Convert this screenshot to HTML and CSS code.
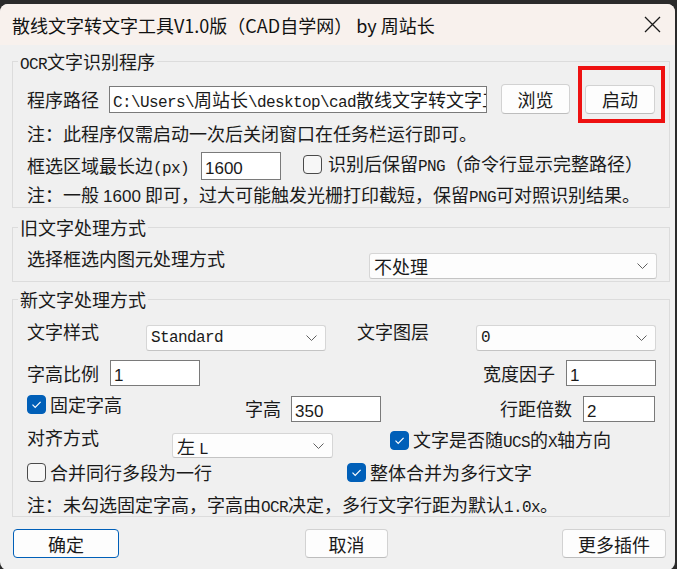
FILE: index.html
```html
<!DOCTYPE html>
<html lang="zh-CN">
<head>
<meta charset="utf-8">
<title>散线文字转文字工具</title>
<link rel="stylesheet" href="styles.css">
</head>
<body>
<div class="window">
  <div class="titlebar">
    <span class="title">散线文字转文字工具V1.0版（CAD自学网） by 周站长</span>
    <svg class="close" width="17" height="17" viewBox="0 0 17 17"><path d="M1 1L16 16M16 1L1 16"/></svg>
  </div>
  <div class="content">
    <section class="group g1">
      <span class="legend"><span class="m">OCR</span>文字识别程序</span>
      <div class="row r-path">
        <span class="label w-path">程序路径</span>
        <div class="input path"><span class="m">C:\Users\</span>周站长<span class="m">\desktop\cad</span>散线文字转文字工具</div>
        <button class="btn b-browse">浏览</button>
        <button class="btn b-start">启动</button>
      </div>
      <div class="note n1">注：此程序仅需启动一次后关闭窗口在任务栏运行即可。</div>
      <div class="row r-size">
        <span class="label w-size">框选区域最长边<span class="m">(px)</span></span>
        <div class="input i-size"><span class="d">1600</span></div>
        <label class="cb-item cb-png"><span class="cb"></span><span>识别后保留<span class="m">PNG</span>（命令行显示完整路径）</span></label>
      </div>
      <div class="note n2">注：一般 <span class="d">1600</span> 即可，过大可能触发光栅打印截短，保留<span class="m">PNG</span>可对照识别结果。</div>
    </section>

    <section class="group g2">
      <span class="legend">旧文字处理方式</span>
      <div class="row r-old">
        <span class="label">选择框选内图元处理方式</span>
        <div class="select s-old"><span>不处理</span><svg class="chev" width="11" height="6" viewBox="0 0 11 6"><path d="M0.5 0.5L5.5 5.5L10.5 0.5"/></svg></div>
      </div>
    </section>

    <section class="group g3">
      <span class="legend">新文字处理方式</span>
      <div class="row r1">
        <span class="label w-style">文字样式</span>
        <div class="select s-style"><span class="m">Standard</span><svg class="chev" width="11" height="6" viewBox="0 0 11 6"><path d="M0.5 0.5L5.5 5.5L10.5 0.5"/></svg></div>
        <span class="label w-layer">文字图层</span>
        <div class="select s-layer"><span class="m">0</span><svg class="chev" width="11" height="6" viewBox="0 0 11 6"><path d="M0.5 0.5L5.5 5.5L10.5 0.5"/></svg></div>
      </div>
      <div class="row r2">
        <span class="label w-ratio">字高比例</span>
        <div class="input i-ratio"><span class="d">1</span></div>
        <span class="label l-width">宽度因子</span>
        <div class="input i-width"><span class="d">1</span></div>
      </div>
      <div class="row r3">
        <label class="cb-item cb-fixed"><span class="cb on"><svg width="19" height="19" viewBox="0 0 19 19"><path d="M5.5 9.6L8.2 12.3L13.6 6.9"/></svg></span><span>固定字高</span></label>
        <span class="label w-h">字高</span>
        <div class="input i-h"><span class="d">350</span></div>
        <span class="label l-line">行距倍数</span>
        <div class="input i-line"><span class="d">2</span></div>
      </div>
      <div class="row r4">
        <span class="label w-align">对齐方式</span>
        <div class="select s-align"><span>左 <span class="m">L</span></span><svg class="chev" width="11" height="6" viewBox="0 0 11 6"><path d="M0.5 0.5L5.5 5.5L10.5 0.5"/></svg></div>
        <label class="cb-item cb-ucs"><span class="cb on"><svg width="19" height="19" viewBox="0 0 19 19"><path d="M5.5 9.6L8.2 12.3L13.6 6.9"/></svg></span><span>文字是否随<span class="m">UCS</span>的<span class="m">X</span>轴方向</span></label>
      </div>
      <div class="row r5">
        <label class="cb-item cb-merge"><span class="cb"></span><span>合并同行多段为一行</span></label>
        <label class="cb-item"><span class="cb on"><svg width="19" height="19" viewBox="0 0 19 19"><path d="M5.5 9.6L8.2 12.3L13.6 6.9"/></svg></span><span>整体合并为多行文字</span></label>
      </div>
      <div class="note n3">注：未勾选固定字高，字高由<span class="m">OCR</span>决定，多行文字行距为默认<span class="m">1.0x</span>。</div>
    </section>

    <div class="actions">
      <button class="btn b-ok">确定</button>
      <button class="btn b-cancel">取消</button>
      <button class="btn b-more">更多插件</button>
    </div>
  </div>
  <div class="highlight"></div>
</div>
</body>
</html>
```

FILE: styles.css
```css
* { box-sizing: border-box; }
html, body { margin: 0; padding: 0; }
body {
  background: #2b2b2b;
  width: 677px;
  height: 569px;
  overflow: hidden;
  padding-top: 4px;
  font-family: "Noto Sans CJK SC", "Noto Sans", sans-serif;
  font-size: 18px;
  color: #1a1a1a;
}
.window {
  position: relative;
  width: 675px;
  height: 566px;
  background: #f0f0f0;
  border-radius: 8px;
  overflow: hidden;
}
.titlebar {
  height: 41px;
  background: #f8f1ed;
  display: flex;
  align-items: center;
  padding-left: 12px;
}
.title { flex: 1; font-size: 18px; line-height: 24px; color: #111; }
.close { margin-right: 14px; }
.close path { stroke: #1a1a1a; stroke-width: 1.3; fill: none; }

.content { padding-left: 12px; }

.m {
  font-family: "Liberation Mono", monospace;
  font-size: 16px;
  letter-spacing: -0.6px;
  line-height: 16px;
}
.d { font-family: "Liberation Sans", sans-serif; font-size: 17px; line-height: 16px; }

.group {
  position: relative;
  width: 658px;
  padding: 0 12px 0 14px;
  border: 1px solid #dcdcdc;
}
.legend {
  position: absolute;
  left: 5px;
  top: -11px;
  padding: 0 2px;
  background: #f0f0f0;
  line-height: 20px;
  height: 20px;
  white-space: nowrap;
}
.row { display: flex; }
.label { line-height: 20px; white-space: nowrap; }
.note { line-height: 20px; height: 20px; white-space: nowrap; }

.input {
  background: #fff;
  border: 1px solid #7a7a7a;
  height: 26px;
  padding-left: 3px;
  line-height: 24px;
  white-space: nowrap;
  overflow: hidden;
}
.select {
  background: #fdfdfd;
  border: 1px solid #d6d6d6;
  border-bottom-color: #c4c4c4;
  border-radius: 3px;
  height: 26px;
  padding: 0 8px 0 4px;
  display: flex;
  align-items: center;
  justify-content: space-between;
  line-height: 24px;
  white-space: nowrap;
}
.chev path { stroke: #606060; stroke-width: 1; fill: none; }

.btn {
  font-family: inherit;
  font-size: 18px;
  color: #1a1a1a;
  background: #fdfdfd;
  border: 1px solid #d2d2d2;
  border-bottom-color: #bdbdbd;
  border-radius: 4px;
  padding: 0;
  line-height: 26px;
}

.cb-item { display: flex; align-items: center; line-height: 20px; height: 20px; white-space: nowrap; }
.cb {
  width: 19px;
  height: 19px;
  border: 1px solid #4a4a4a;
  border-radius: 4px;
  background: #f7f7f7;
  margin-right: 4px;
  flex: none;
}
.cb.on { background: #005fb8; border-color: #005fb8; }
.cb svg { display: block; margin: -1px; }
.cb svg path { stroke: #fff; stroke-width: 1.2; fill: none; }

/* group 1: border 61..208 */
.g1 { margin-top: 16px; padding-top: 22px; padding-bottom: 3px; }
.r-path { height: 30px; align-items: center; }
.w-path { width: 82px; }
.path { width: 378px; height: 27px; line-height: 25px; }
.b-browse { margin-left: 14px; width: 69px; height: 30px; }
.b-start { margin-left: 15px; width: 70px; height: 29px; }
.n1 { margin-top: 9px; }
.r-size { margin-top: 9px; height: 28px; align-items: center; }
.w-size { width: 174px; }
.i-size { width: 80px; height: 28px; line-height: 26px; }
.cb-png { margin-left: 22px; margin-top: -4px; }
.cb-png .cb { margin-right: 6px; }
.n2 { margin-top: 4px; }

/* group 2: border 228..283 */
.g2 { margin-top: 19px; padding-bottom: 2px; }
.r-old { height: 51px; align-items: flex-start; justify-content: space-between; }
.r-old .label { margin-top: 20px; }
.s-old { margin-top: 25px; width: 288px; }

/* group 3: border 301..519 */
.g3 { margin-top: 17px; padding-top: 21px; padding-bottom: 2px; }
.r1 { height: 30px; align-items: flex-start; }
.r1 .select { margin-top: 4px; width: 180px; }
.w-style { width: 119px; }
.w-layer { width: 119px; margin-left: 31px; }
.r2 { margin-top: 9px; height: 26px; align-items: center; }
.w-ratio { width: 83px; }
.i-ratio { width: 90px; }
.l-width { margin-left: auto; margin-right: 11px; }
.i-width { width: 90px; margin-right: 1px; }
.r3 { margin-top: 8px; height: 28px; align-items: center; }
.cb-fixed { width: 218px; align-self: flex-start; }
.w-h { width: 46px; }
.i-h { width: 90px; align-self: flex-end; }
.l-line { margin-left: 119px; width: 83px; }
.i-line { width: 72px; align-self: flex-end; }
.r4 { margin-top: 5px; height: 31px; align-items: flex-start; }
.w-align { width: 145px; }
.s-align { width: 161px; height: 25px; margin-top: 6px; }
.cb-ucs { margin-left: 57px; margin-top: 3px; }
.r5 { margin-top: 4px; height: 20px; align-items: center; }
.cb-merge { width: 320px; }
.n3 { margin-top: 12px; }

/* buttons */
.actions { display: flex; margin-top: 12px; padding-left: 1px; }
.actions .btn { height: 29px; }
.b-ok { width: 106px; border-color: #005fb8; }
.b-cancel { width: 83px; margin-left: 186px; }
.b-more { width: 104px; margin-left: 174px; }

.highlight {
  position: absolute;
  left: 578px;
  top: 62px;
  width: 87px;
  height: 57px;
  border: 4px solid #ee1111;
}
```
